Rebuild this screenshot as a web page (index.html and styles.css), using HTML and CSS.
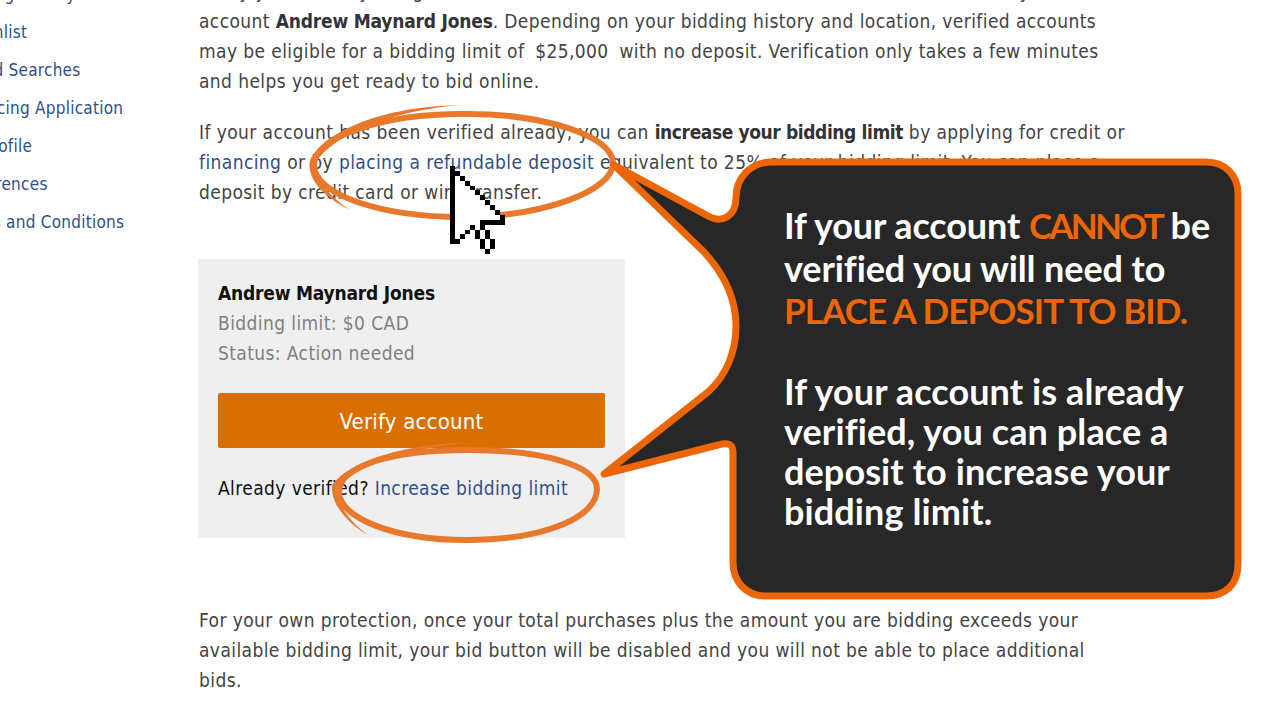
FILE: index.html
```html
<!DOCTYPE html>
<html lang="en">
<head>
    <meta charset="UTF-8">
    <meta name="viewport" content="width=device-width, initial-scale=1.0">
    <title>Verify account</title>
    <link rel="stylesheet" href="styles.css">
</head>
<body>
    <div class="page">
        <!-- side menu, cut off by the left edge -->
        <ul class="side-menu">
            <li><a href="#">Bidding History</a></li>
            <li><a href="#">Watchlist</a></li>
            <li><a href="#">Saved Searches</a></li>
            <li><a href="#">Financing Application</a></li>
            <li><a href="#">My Profile</a></li>
            <li><a href="#">Preferences</a></li>
            <li><a href="#">Terms and Conditions</a></li>
        </ul>

        <main class="content">
            <p class="intro">
                Verify your identity using a credit card or a bank account, and we will confirm the name on your<br>
                account <strong>Andrew Maynard Jones</strong>. Depending on your bidding history and location, verified accounts<br>
                may be eligible for a bidding limit of <span class="amount">$25,000</span> with no deposit. Verification only takes a few minutes<br>
                and helps you get ready to bid online.
            </p>
            <p>
                If your account has been verified already, you can <strong class="tight">increase your bidding limit</strong> by applying for credit or<br>
                <a href="#">financing</a> or by <a href="#">placing a refundable deposit</a> equivalent to 25% of your bidding limit. You can place a<br>
                deposit by credit card or wire transfer.
            </p>

            <div class="limit-card">
                <div class="limit-name">Andrew Maynard Jones</div>
                <div class="limit-info">Bidding limit: $0 CAD</div>
                <div class="limit-info">Status: Action needed</div>
                <a href="#" class="verify-btn">Verify account</a>
                <div class="limit-foot">Already verified? <a href="#">Increase bidding limit</a></div>
            </div>

            <p class="protect">
                For your own protection, once your total purchases plus the amount you are bidding exceeds your<br>
                available bidding limit, your bid button will be disabled and you will not be able to place additional<br>
                bids.
            </p>
        </main>
    </div>

    <!-- hand drawn circles -->
    <svg class="overlay" width="1280" height="720" viewBox="0 0 1280 720">
        <g fill="none" stroke="#e8792c" stroke-width="6">
            <path d="M462 114C540 113 613 135 613 163C613 192 540 217 462 217C382 217 314 195 314 165C314 136 385 114 462 114Z"/>
            <path d="M467 450C545 450 597 466 597 489C597 517 545 540 467 540C392 540 339 517 339 492C339 466 392 450 467 450Z"/>
        </g>
        <g fill="#e8792c">
            <path d="M461 105C395 106 330 125 310 160C306 180 326 198 350 210C332 198 318 184 314 165C335 130 400 110 461 105Z"/>
            <path d="M467 443C410 443 350 460 332 485C330 505 350 525 368 535C354 525 340 510 336 490C355 465 410 448 467 443Z"/>
        </g>
    </svg>

    <!-- callout bubble -->
    <svg class="overlay" width="1280" height="720" viewBox="0 0 1280 720">
        <path fill="#272727" stroke="#ec6608" stroke-width="7" stroke-linejoin="round" d="M614 165L708 216C722 224 736 216 736 198C736 178 750 162 772 162L1206 162C1226 162 1238 176 1238 194L1238 564C1238 584 1226 596 1206 596L766 596C746 596 733 582 733 562L733 452C733 444 728 442 718 445L604 474L708 392C726 376 736 352 736 326C736 300 726 276 704 252Z"/>
    </svg>
    <div class="bubble-text">
        <p class="bubble-first">If your account <span class="hot hot-word">CANNOT</span> be verified you will need to <span class="hot">PLACE A DEPOSIT TO BID.</span></p>
        <p class="bubble-second">If your account is already verified, you can place a deposit to increase your bidding limit.</p>
    </div>

    <!-- pixel arrow cursor, one unit is one cursor pixel -->
    <svg class="cursor" width="56" height="88" viewBox="0 0 11.2 18" preserveAspectRatio="none" shape-rendering="crispEdges">
        <path stroke="#fff" stroke-width="1" fill="none" d="M1 2.5h1M1 3.5h2M1 4.5h3M1 5.5h4M1 6.5h5M1 7.5h6M1 8.5h7M1 9.5h8M1 10.5h9M1 11.5h5M1 12.5h3M5 12.5h1M1 13.5h2M6 13.5h1M1 14.5h1M6 14.5h1M7 15.5h1M7 16.5h1"/>
        <path stroke="#000" stroke-width="1" fill="none" d="M0 0.5h1M0 1.5h2M0 2.5h1M2 2.5h1M0 3.5h1M3 3.5h1M0 4.5h1M4 4.5h1M0 5.5h1M5 5.5h1M0 6.5h1M6 6.5h1M0 7.5h1M7 7.5h1M0 8.5h1M8 8.5h1M0 9.5h1M9 9.5h1M0 10.5h1M10 10.5h1M0 11.5h1M6 11.5h5M0 12.5h1M4 12.5h1M6 12.5h1M0 13.5h1M3 13.5h1M5 13.5h1M7 13.5h1M0 14.5h1M2 14.5h1M5 14.5h1M7 14.5h1M0 15.5h2M6 15.5h1M8 15.5h1M6 16.5h1M8 16.5h1M7 17.5h1"/>
    </svg>
</body>
</html>
```

FILE: styles.css
```css
/* base */
body {
    margin: 0;
    height: 720px;
    overflow: hidden;
    position: relative;
    background: #fff;
    font-family: "DejaVu Sans", "Liberation Sans", sans-serif;
    font-stretch: condensed;
    font-size: 19px;
    line-height: 30px;
    letter-spacing: 0.4px;
    color: #444;
}

a {
    color: #2f4f8a;
    text-decoration: none;
}

.page {
    display: flex;
    margin-top: -24px;
}

/* side menu */
.side-menu {
    list-style: none;
    margin: -1px 0 0 -45px;
    padding: 0;
    width: 244px;
    flex-shrink: 0;
    font-size: 17px;
    letter-spacing: 0.25px;
    line-height: 38px;
}

/* main text */
.content {
    width: 930px;
}

.content p {
    margin: 0 0 21px;
    white-space: nowrap;
}

.content strong {
    font-weight: 700;
    letter-spacing: -0.2px;
    color: #333;
}

.content .tight {
    letter-spacing: -0.4px;
}

.amount {
    margin: 0 5px;
}

/* bidding limit card */
.limit-card {
    width: 387px;
    margin: 52px 0 0 -1px;
    padding: 19px 20px 20px;
    background: #efefef;
}

.limit-name {
    color: #111;
    font-weight: 700;
    letter-spacing: -0.2px;
}

.limit-info {
    color: #808080;
}

.verify-btn {
    display: block;
    margin: 25px 0 25px;
    height: 55px;
    line-height: 57px;
    border-radius: 2px;
    background: #d86f00;
    color: #fff;
    font-size: 22px;
    letter-spacing: 0.2px;
    text-align: center;
}

.limit-foot {
    color: #111;
    padding-bottom: 15px;
}

.protect {
    margin-top: 67px !important;
}

/* annotations on top of the page */
.overlay {
    position: absolute;
    top: 0;
    left: 0;
}

.cursor {
    position: absolute;
    left: 450px;
    top: 166px;
}

.bubble-text {
    position: absolute;
    left: 784px;
    top: 204px;
    width: 440px;
    font-family: "Lato", "Liberation Sans", sans-serif;
    font-stretch: normal;
    font-size: 36px;
    font-weight: 700;
    color: #fff;
}

.bubble-text p {
    margin: 0;
}

.bubble-first {
    line-height: 42.5px;
    letter-spacing: -0.1px;
    margin-bottom: 39px !important;
}

.bubble-second {
    line-height: 40px;
    letter-spacing: 0.1px;
}

.hot {
    color: #ec6608;
    font-size: 35px;
    letter-spacing: -0.9px;
}

.hot-word {
    letter-spacing: -2.8px;
}
```
